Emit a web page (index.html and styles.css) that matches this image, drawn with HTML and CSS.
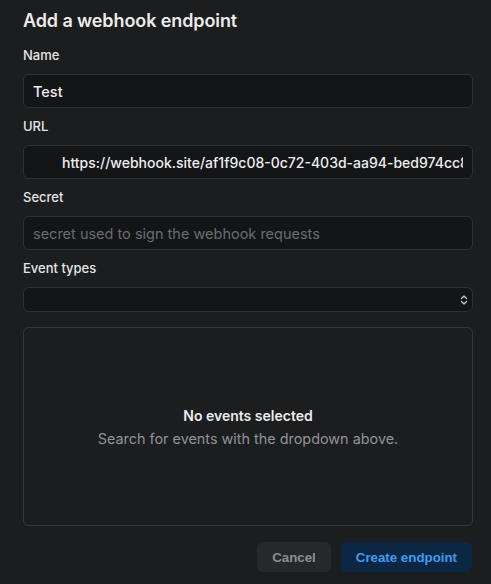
FILE: index.html
```html
<!DOCTYPE html>
<html>
<head>
<meta charset="utf-8">
<link rel="stylesheet" href="styles.css">
</head>
<body>
<div class="dialog">
  <h1 class="title">Add a webhook endpoint</h1>
  <div class="fields">
    <div class="field">
      <label class="label">Name</label>
      <div class="input"><span class="value">Test</span></div>
    </div>
    <div class="field">
      <label class="label">URL</label>
      <div class="input url"><span class="value">https://webhook.site/af1f9c08-0c72-403d-aa94-bed974cc8a1b</span></div>
    </div>
    <div class="field">
      <label class="label">Secret</label>
      <div class="input"><span class="placeholder">secret used to sign the webhook requests</span></div>
    </div>
    <div class="field">
      <label class="label">Event types</label>
      <div class="select">
        <svg class="chev" width="8" height="12" viewBox="0 0 8 12" fill="none" stroke="#c8cacd" stroke-width="1.2" stroke-linecap="round" stroke-linejoin="round"><path d="M1.5 4.5 L4 2 L6.5 4.5"/><path d="M1.5 7.5 L4 10 L6.5 7.5"/></svg>
      </div>
    </div>
  </div>
  <div class="events">
    <div class="empty-title">No events selected</div>
    <div class="empty-sub">Search for events with the dropdown above.</div>
  </div>
  <div class="actions">
    <button class="btn cancel">Cancel</button>
    <button class="btn primary">Create endpoint</button>
  </div>
</div>
</body>
</html>
```

FILE: styles.css
```css
html, body {
  margin: 0;
  padding: 0;
  background: #1c1d1f;
  height: 100%;
}
body {
  font-family: Inter, "Noto Sans", sans-serif;
  color: #e8e9ea;
}
.dialog {
  padding: 9px 18px 12px 23px;
  display: flex;
  flex-direction: column;
  box-sizing: border-box;
  height: 584px;
}
.title {
  margin: 0;
  font-size: 18px;
  line-height: 24px;
  font-weight: 600;
  color: #ececed;
  letter-spacing: -0.1px;
}
.fields {
  margin-top: 12px;
  display: flex;
  flex-direction: column;
  gap: 8px;
}
.field {
  display: flex;
  flex-direction: column;
}
.label {
  font-size: 13px;
  line-height: 20px;
  font-weight: 500;
  color: #e4e5e6;
  margin-bottom: 9px;
}
.input {
  height: 34px;
  box-sizing: border-box;
  border: 1px solid #2f3134;
  border-radius: 6px;
  background: #141517;
  display: flex;
  align-items: center;
  padding: 0 9px;
  overflow: hidden;
  white-space: nowrap;
  font-size: 14.5px;
}
.input.url {
  padding-left: 38px;
  padding-right: 9px;
  font-size: 14px;
}
.value {
  color: #eeeeef;
  font-weight: 500;
}
.url .value {
  overflow: hidden;
  display: block;
  width: 100%;
}
.placeholder {
  color: #6a6d72;
}
.select {
  height: 25px;
  box-sizing: border-box;
  border: 1px solid #2f3134;
  border-radius: 6px;
  background: #141517;
  display: flex;
  align-items: center;
  justify-content: flex-end;
  padding-right: 4px;
}
.chev {
  display: block;
}
.events {
  margin-top: 15px;
  flex: 1;
  border: 1px solid #34373a;
  border-radius: 6px;
  display: flex;
  flex-direction: column;
  align-items: center;
  justify-content: center;
}
.empty-title {
  font-size: 14px;
  font-weight: 600;
  line-height: 23px;
  color: #ececed;
}
.empty-sub {
  font-size: 14.4px;
  line-height: 23px;
  color: #909398;
}
.actions {
  margin-top: 16px;
  display: flex;
  justify-content: flex-end;
  gap: 10px;
  padding-right: 1px;
}
.btn {
  height: 30px;
  border: none;
  border-radius: 6px;
  font-family: "Liberation Sans", Arial, sans-serif;
  font-weight: 700;
  font-size: 13.3px;
  padding: 0 15px;
  cursor: pointer;
}
.cancel {
  background: #26282a;
  color: #8c8f93;
}
.primary {
  background: #0c2743;
  color: #3f9bef;
}
```
